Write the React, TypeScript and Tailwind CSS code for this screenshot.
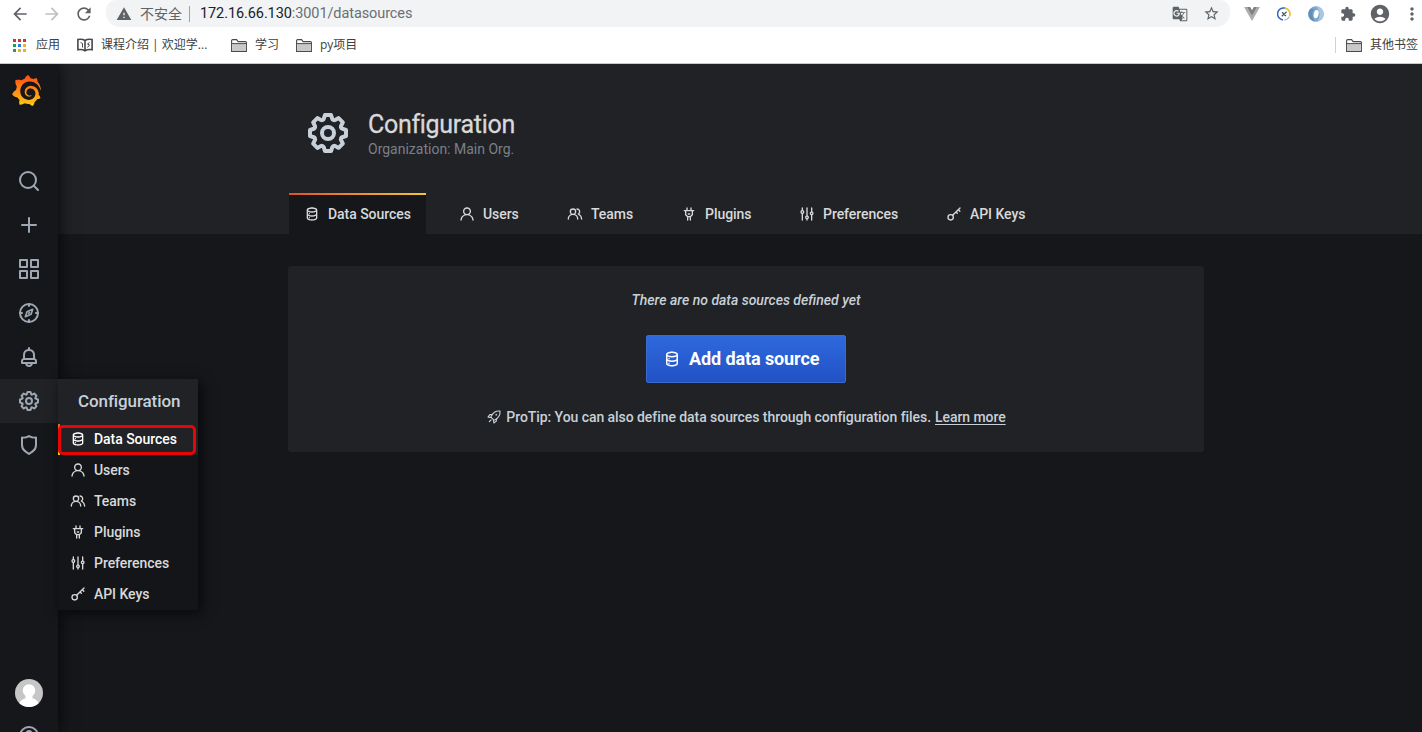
import type { ReactNode } from "react";
import clsx from "clsx";
import {
  MdAccountCircle,
  MdArrowBack,
  MdArrowForward,
  MdExtension,
  MdGTranslate,
  MdMoreVert,
  MdRefresh,
  MdStarBorder,
  MdWarning,
} from "react-icons/md";
import { SiGrafana } from "react-icons/si";

const paths = {
  cog: "M21.32,9.55l-1.89-.63.89-1.78A1,1,0,0,0,20.13,6L18,3.87a1,1,0,0,0-1.15-.19l-1.78.89-.63-1.89A1,1,0,0,0,13.5,2h-3a1,1,0,0,0-.95.68L8.92,4.57,7.14,3.68A1,1,0,0,0,6,3.87L3.87,6a1,1,0,0,0-.19,1.15l.89,1.78-1.89.63A1,1,0,0,0,2,10.5v3a1,1,0,0,0,.68.95l1.89.63-.89,1.78A1,1,0,0,0,3.87,18L6,20.13a1,1,0,0,0,1.15.19l1.78-.89.63,1.89a1,1,0,0,0,.95.68h3a1,1,0,0,0,.95-.68l.63-1.89,1.78.89A1,1,0,0,0,18,20.13L20.13,18a1,1,0,0,0,.19-1.15l-.89-1.78,1.89-.63A1,1,0,0,0,22,13.5v-3A1,1,0,0,0,21.32,9.55ZM20,12.78l-1.2.4A2,2,0,0,0,17.64,16l.57,1.14-1.1,1.1L16,17.64a2,2,0,0,0-2.79,1.16l-.4,1.2H11.22l-.4-1.2A2,2,0,0,0,8,17.64l-1.14.57-1.1-1.1L6.36,16A2,2,0,0,0,5.2,13.18L4,12.78V11.22l1.2-.4A2,2,0,0,0,6.36,8L5.79,6.89l1.1-1.1L8,6.36A2,2,0,0,0,10.82,5.2l.4-1.2h1.56l.4,1.2A2,2,0,0,0,16,6.36l1.14-.57,1.1,1.1L17.64,8a2,2,0,0,0,1.16,2.79l1.2.4ZM12,8a4,4,0,1,0,4,4A4,4,0,0,0,12,8Zm0,6a2,2,0,1,1,2-2A2,2,0,0,1,12,14Z",
  bell: "M18,13.18V10a6,6,0,0,0-5-5.91V3a1,1,0,0,0-2,0V4.09A6,6,0,0,0,6,10v3.18A3,3,0,0,0,4,16v2a1,1,0,0,0,1,1H8.14a4,4,0,0,0,7.72,0H19a1,1,0,0,0,1-1V16A3,3,0,0,0,18,13.18ZM8,10a4,4,0,0,1,8,0v3H8Zm4,10a2,2,0,0,1-1.72-1h3.44A2,2,0,0,1,12,20Zm6-3H6V16a1,1,0,0,1,1-1H17a1,1,0,0,1,1,1Z",
  shield:
    "M19.63,3.65a1,1,0,0,0-.84-.2,8,8,0,0,1-6.22-1.27,1,1,0,0,0-1.14,0A8,8,0,0,1,5.21,3.45a1,1,0,0,0-.84.2A1,1,0,0,0,4,4.43v7.45a9,9,0,0,0,3.77,7.33l3.65,2.6a1,1,0,0,0,1.16,0l3.65-2.6A9,9,0,0,0,20,11.88V4.43A1,1,0,0,0,19.63,3.65ZM18,11.88a7,7,0,0,1-2.93,5.7L12,19.77,8.93,17.58A7,7,0,0,1,6,11.88V5.58a10,10,0,0,0,6-1.39,10,10,0,0,0,6,1.39Z",
  database:
    "M8,16.5a1,1,0,1,0,1,1A1,1,0,0,0,8,16.5ZM12,2C8,2,4,3.37,4,6V18c0,2.63,4,4,8,4s8-1.37,8-4V6C20,3.37,16,2,12,2Zm6,16c0,.71-2.28,2-6,2s-6-1.29-6-2V14.73A13.16,13.16,0,0,0,12,16a13.16,13.16,0,0,0,6-1.27Zm0-6c0,.71-2.28,2-6,2s-6-1.29-6-2V8.73A13.16,13.16,0,0,0,12,10a13.16,13.16,0,0,0,6-1.27ZM12,8C8.28,8,6,6.71,6,6s2.28-2,6-2,6,1.29,6,2S15.72,8,12,8ZM8,10.5a1,1,0,1,0,1,1A1,1,0,0,0,8,10.5Z",
  user: "M15.71,12.71a6,6,0,1,0-7.42,0,10,10,0,0,0-6.22,8.18,1,1,0,0,0,2,.22,8,8,0,0,1,15.9,0,1,1,0,0,0,1,.89h.11a1,1,0,0,0,.88-1.1A10,10,0,0,0,15.71,12.71ZM12,12a4,4,0,1,1,4-4A4,4,0,0,1,12,12Z",
  users:
    "M12.3,12.22A4.92,4.92,0,0,0,14,8.5a5,5,0,0,0-10,0,4.92,4.92,0,0,0,1.7,3.72A8,8,0,0,0,1,19.5a1,1,0,0,0,2,0,6,6,0,0,1,12,0,1,1,0,0,0,2,0A8,8,0,0,0,12.3,12.22ZM9,11.5a3,3,0,1,1,3-3A3,3,0,0,1,9,11.5Zm9.74.32A5,5,0,0,0,15,3.5a1,1,0,0,0,0,2,3,3,0,0,1,3,3,3,3,0,0,1-1.5,2.59,1,1,0,0,0-.5.84,1,1,0,0,0,.45.86l.39.26.13.07a7,7,0,0,1,4,6.38,1,1,0,0,0,2,0A9,9,0,0,0,18.74,11.82Z",
  plug: "M19,6H16V3a1,1,0,0,0-2,0V6H10V3A1,1,0,0,0,8,3V6H5A1,1,0,0,0,5,8H6v5a1,1,0,0,0,.29.71L9,16.41V21a1,1,0,0,0,2,0V17h2v4a1,1,0,0,0,2,0V16.41l2.71-2.7A1,1,0,0,0,18,13V8h1a1,1,0,0,0,0-2Zm-3,6.59L13.59,15H10.41L8,12.59V8h8ZM11,13h2a1,1,0,0,0,0-2H11a1,1,0,0,0,0,2Z",
  sliders:
    "M20,8.18V3a1,1,0,0,0-2,0V8.18a3,3,0,0,0,0,5.64V21a1,1,0,0,0,2,0V13.82a3,3,0,0,0,0-5.64ZM19,12a1,1,0,1,1,1-1A1,1,0,0,1,19,12Zm-6,2.18V3a1,1,0,0,0-2,0V14.18a3,3,0,0,0,0,5.64V21a1,1,0,0,0,2,0V19.82a3,3,0,0,0,0-5.64ZM12,18a1,1,0,1,1,1-1A1,1,0,0,1,12,18ZM6,6.18V3A1,1,0,0,0,4,3V6.18a3,3,0,0,0,0,5.64V21a1,1,0,0,0,2,0V11.82A3,3,0,0,0,6,6.18ZM5,10A1,1,0,1,1,6,9,1,1,0,0,1,5,10Z",
};

// line icons
const strokes: Record<string, ReactNode> = {
  search: (
    <>
      <circle cx="11" cy="11" r="8" />
      <path d="M16.8 16.8 21 21" />
    </>
  ),
  plus: <path d="M12 5v14M5 12h14" />,
  apps: (
    <path d="M3 3h7v7H3zM14 3h7v7h-7zM3 14h7v7H3zM14 14h7v7h-7z" />
  ),
  compass: (
    <>
      <circle cx="12" cy="12" r="9" />
      <path d="M12 3v2M12 19v2M3 12h2M19 12h2" />
      <path d="M15.7 8.3l-1.6 4.9-5.8 2.5 1.7-5zM11.5 12.5l1-1" strokeWidth="1.6" />
    </>
  ),
  key: (
    <>
      <circle cx="7" cy="17" r="4" />
      <path d="M10 14 21 3M18.5 5.5l2.3 2.3M15 9l2 2" />
    </>
  ),
  rocket: (
    <>
      <path d="M21 3c-6-.6-10.3 2-13 7.5l-.7 1.7 4.5 4.5 1.7-.7C19 13.3 21.6 9 21 3Z" />
      <path d="M9 8.5H5.800L3 12.200l4.300.6M15.500 15v3.200L11.800 21l-.6-4.300M7.500 16.500 5 19" />
      <circle cx="15.5" cy="8.5" r=".5" />
    </>
  ),
  help: (
    <>
      <circle cx="12" cy="12" r="9" />
      <path d="M9.4 9.5a2.6 2.6 0 1 1 3.7 2.4c-.7.3-1.1.8-1.1 1.6M12 16.5v.2" />
    </>
  ),
};

type IconProps = { name: string; className?: string };

function Icon({ name, className }: IconProps) {
  if (name in paths) {
    return (
      <svg viewBox="0 0 24 24" fill="currentColor" className={clsx("shrink-0", className)}>
        <path d={paths[name as keyof typeof paths]} />
      </svg>
    );
  }
  return (
    <svg
      viewBox="0 0 24 24"
      fill="none"
      stroke="currentColor"
      strokeWidth={name === "rocket" ? 1.7 : 2}
      strokeLinecap="round"
      strokeLinejoin="round"
      className={clsx("shrink-0", className)}
    >
      {strokes[name]}
    </svg>
  );
}

const configItems = [
  { icon: "database", label: "Data Sources", tab: "w-[137px]" },
  { icon: "user", label: "Users", tab: "w-[90px]" },
  { icon: "users", label: "Teams", tab: "w-[96px]" },
  { icon: "plug", label: "Plugins", tab: "w-[100px]" },
  { icon: "sliders", label: "Preferences", tab: "w-[129px]" },
  { icon: "key", label: "API Keys", tab: "w-[110px]" },
];

const navItems = ["search", "plus", "apps", "compass", "bell", "cog", "shield"];

function Folder() {
  return (
    <svg viewBox="0 0 16 13" className="h-[13px] w-4 shrink-0">
      <path d="M.6 12.4V1.6a1 1 0 0 1 1-1h4l1.5 2h7.3a1 1 0 0 1 1 1v8.800z" fill="#fff" stroke="#4a4a4d" strokeWidth="1.1" />
      <path d="M1.2 5h13.6v6.900H1.200z" fill="#c9c9cb" />
      <path d="M.6 4.6h14.8" stroke="#4a4a4d" />
    </svg>
  );
}

const appDots = [
  "bg-[#d0322c]", "bg-[#d0322c]", "bg-[#d0322c]",
  "bg-[#1e9e58]", "bg-[#2f7de1]", "bg-[#e8b32c]",
  "bg-[#1e9e58]", "bg-[#e8b32c]", "bg-[#e8b32c]",
];

function BrowserBar() {
  return (
    <div className="h-16 border-b border-[#c9cacc] bg-white text-[#3c4043]">
      <div className="flex h-[27px] items-center">
        <div className="flex w-[106px] shrink-0 items-center pl-[10px] text-[#5f6368]">
          <MdArrowBack className="size-5" />
          <MdArrowForward className="ml-3 size-5 text-[#bdc0c4]" />
          <MdRefresh className="ml-3 size-5" />
        </div>
        <div className="flex h-[27px] w-[1124px] shrink-0 items-center rounded-b-[14px] rounded-t-[10px] bg-[#f1f3f4] px-[10px]">
          <MdWarning className="size-4 shrink-0 text-[#5f6368]" />
          <span className="ml-2 w-[43px] whitespace-nowrap text-[14px] text-[#5f6368]">不安全</span>
          <span className="ml-[6px] h-4 w-px bg-[#9aa0a6]" />
          <span className="ml-[10px] whitespace-nowrap font-[Roboto] text-[14.5px] tracking-[-0.09px] text-[#6a6e73]">
            <span className="text-[#202124]">172.16.66.130</span>:3001/datasources
          </span>
          <MdGTranslate className="ml-auto size-4 text-[#5f6368]" />
          <MdStarBorder className="ml-[15px] size-[17px] text-[#5f6368]" />
        </div>
        <div className="flex flex-1 items-center text-[#5f6368]">
          <svg viewBox="0 0 16 14" className="ml-[14px] h-[14px] w-4 shrink-0">
            <path d="M0 0h4l4 7 4-7h4L8 14z" fill="#adadad" />
            <path d="M3.2 0H6.200L8 3.200 9.800 0h3L8 8.400z" fill="#7f7f7f" />
          </svg>
          <svg viewBox="0 0 14 14" className="ml-[17px] size-[14px] shrink-0" fill="none">
            <path d="M8 1.1A6 6 0 1 0 6 12.900" stroke="#2f66c4" strokeWidth="1.5" />
            <path d="M8 1.1a6 6 0 0 1 4.6 8" stroke="#f2bc35" strokeWidth="1.7" />
            <path d="M12.3 9.5A6 6 0 0 1 7 13" stroke="#9fb4d6" strokeWidth="1.2" />
            <path d="M4.8 9.3 9.6 4.7M5 5.3l1.700 1.500M7.300 8.300l1.900.3" stroke="#50555c" strokeWidth="1.2" />
          </svg>
          <svg viewBox="0 0 16 16" className="ml-[17px] size-4 shrink-0" fill="none">
            <circle cx="8" cy="8" r="7.8" fill="#7fa6cb" />
            <path d="M8 .2a7.8 7.8 0 0 1 1 15.5C13 11 12 4 8 .2Z" fill="#a9c7e1" />
            <path d="M2 3.2a7.8 7.8 0 0 0 5 12.5C4 12 3.5 7 6 2.500z" fill="#5f8fbd" />
            <ellipse cx="8.2" cy="8" rx="2.4" ry="4.2" fill="#fff" transform="rotate(12 8 8)" />
          </svg>
          <MdExtension className="ml-4 size-4 shrink-0" />
          <MdAccountCircle className="ml-[13px] size-[22px] shrink-0" />
          <MdMoreVert className="-mr-1 ml-[11px] size-5 shrink-0" />
        </div>
      </div>
      <div className="flex h-9 items-center whitespace-nowrap text-[12px]">
        <div className="ml-[13px] grid grid-cols-3 gap-[2px]">
          {appDots.map((color, i) => (
            <span key={i} className={clsx("size-[3px]", color)} />
          ))}
        </div>
        <span className="ml-[10px] w-6">应用</span>
        <svg viewBox="0 0 16 14" className="ml-[17px] h-[14px] w-4" fill="none" stroke="#45484b" strokeWidth="1.6">
          <path d="M8 12.8C6 11.5 3.5 11.3.9 11.7V1.5C3.5 1 6 1.2 8 2.5c2-1.3 4.5-1.5 7.1-1v10.2c-2.6-.4-5.1-.2-7.1 1.1ZM8 2.5v10" />
          <path d="M3.5 4.5l2 1v4M12.5 4.5l-2 1.5 2 1-2 2.5" strokeWidth="1" />
        </svg>
        <span className="ml-2 w-[108px]">课程介绍 | 欢迎学...</span>
        <span className="ml-[22px]"><Folder /></span>
        <span className="ml-2 w-6">学习</span>
        <span className="ml-[17px]"><Folder /></span>
        <span className="ml-2">py项目</span>
        <span className="ml-auto h-4 w-px bg-[#cfd1d4]" />
        <span className="ml-[10px]"><Folder /></span>
        <span className="ml-2 mr-1">其他书签</span>
      </div>
    </div>
  );
}

function ConfigMenu() {
  return (
    <div className="absolute left-[58px] top-0 z-20 w-[140px] bg-[#141519] shadow-[3px_3px_12px_rgba(0,0,0,0.7)]">
      <div className="flex h-[45px] items-center bg-[#202226] pl-5 text-[17px] tracking-[-0.1px] text-[#c7d0d9]">
        Configuration
      </div>
      {configItems.map((item, i) => (
        <div
          key={item.label}
          className={clsx(
            "flex h-[31px] items-center pl-3 text-[14px] tracking-[-0.05px]",
            i === 0 ? "bg-[#202226] text-white" : "text-[#d8d9da]",
          )}
        >
          <Icon name={item.icon} className="mb-px size-4" />
          <span className="ml-2 whitespace-nowrap">{item.label}</span>
        </div>
      ))}
      <div className="absolute left-0 top-[45px] h-[31px] w-[2px] bg-gradient-to-b from-[#f05a28] to-[#fbca0a]" />
      <div className="absolute left-0 top-[46px] h-[30px] w-[138px] rounded-[5px] border-[3px] border-[#e60606]" />
    </div>
  );
}

function Sidebar() {
  return (
    <nav className="relative z-10 flex h-full w-[58px] shrink-0 flex-col bg-[#16171b] text-[#9fa7b3] shadow-[0_0_16px_rgba(0,0,0,0.85)]">
      <div className="flex h-[95px] items-start justify-center pr-[5px] pt-[11px]">
        <svg className="absolute size-0">
          <linearGradient id="flame" x1="0" y1="0" x2="0" y2="1">
            <stop offset="0" stopColor="#ff4a12" />
            <stop offset="1" stopColor="#ffcb14" />
          </linearGradient>
        </svg>
        <SiGrafana className="size-[31px]" fill="url(#flame)" />
      </div>
      {navItems.map((name) => (
        <div
          key={name}
          className={clsx(
            "relative flex h-11 shrink-0 items-center justify-center",
            name === "cog" && "bg-[#202226]",
          )}
        >
          <Icon name={name} className="size-6" />
          {name === "cog" && <ConfigMenu />}
        </div>
      ))}
      <div className="mt-auto flex flex-col items-center">
        <svg viewBox="0 0 28 28" className="size-7">
          <clipPath id="avatar">
            <circle cx="14" cy="14" r="14" />
          </clipPath>
          <g clipPath="url(#avatar)">
            <path d="M0 0h28v28H0z" fill="#c6c6c6" />
            <circle cx="14" cy="11.5" r="6.3" fill="#fff" />
            <path d="M3 28c1-6 5-9 11-9s10 3 11 9z" fill="#fff" />
            <path d="M10.5 15h7v5h-7z" fill="#fff" />
          </g>
        </svg>
        <div className="mt-[17px] h-2 overflow-hidden">
          <Icon name="help" className="size-6" />
        </div>
      </div>
    </nav>
  );
}

function PageHeader() {
  return (
    <header className="h-[170px] bg-[#202226] pl-[230px]">
      <div className="flex h-[129px] pl-4 pt-[45px]">
        <Icon name="cog" className="size-12 text-[#c7d0d9]" />
        <div className="ml-4">
          <h1 className="h-[30px] text-[25px] font-normal leading-[31px] tracking-[-0.3px] text-[#d8d9da] [-webkit-text-stroke:0.3px_#d8d9da]">
            Configuration
          </h1>
          <div className="text-[14px] font-normal leading-5 text-[#7b8087]">Organization: Main Org.</div>
        </div>
      </div>
      <div className="flex h-[41px] pl-px">
        {configItems.map((item, i) => (
          <div
            key={item.label}
            className={clsx(
              "relative mr-[18px] flex shrink-0 items-center pl-[15px] text-[14px] tracking-[-0.05px] text-[#d8d9da]",
              item.tab,
              i === 0 && "bg-[#16171b]",
            )}
          >
            {i === 0 && (
              <span className="absolute inset-x-0 top-0 h-[2px] bg-gradient-to-r from-[#e0502a] to-[#f0c63a]" />
            )}
            <Icon name={item.icon} className="size-4" />
            <span className="ml-2 whitespace-nowrap pt-px">{item.label}</span>
          </div>
        ))}
      </div>
    </header>
  );
}

function EmptyState() {
  return (
    <section className="ml-[230px] mt-8 flex h-[186px] w-[916px] flex-col items-center rounded-[3px] bg-[#202226] text-[#c7d0d9]">
      <div className="mt-6 text-[14px] italic leading-5">There are no data sources defined yet</div>
      <button className="mt-[25px] flex h-12 w-[200px] items-center rounded-[2px] border border-[#3a6bd0] bg-gradient-to-b from-[#2f69de] to-[#2152c4] pb-px pl-4 text-[18px] font-bold tracking-[-0.1px] text-white">
        <Icon name="database" className="size-[18px]" />
        <span className="ml-2 whitespace-nowrap">Add data source</span>
      </button>
      <div className="mt-6 flex items-center whitespace-nowrap text-[14px] leading-5 tracking-[-0.06px]">
        <Icon name="rocket" className="size-4" />
        <span className="ml-1">ProTip: You can also define data sources through configuration files.</span>
        <a className="ml-1 underline underline-offset-2">Learn more</a>
      </div>
    </section>
  );
}

export default function App() {
  return (
    <div className="h-[732px] w-[1422px] overflow-hidden bg-[#16171b] font-['Open_Sans','Noto_Sans_CJK_SC',sans-serif]">
      <BrowserBar />
      <div className="flex h-[668px] overflow-hidden font-[Roboto,sans-serif] font-medium">
        <Sidebar />
        <main className="min-w-0 flex-1">
          <PageHeader />
          <EmptyState />
        </main>
      </div>
    </div>
  );
}
